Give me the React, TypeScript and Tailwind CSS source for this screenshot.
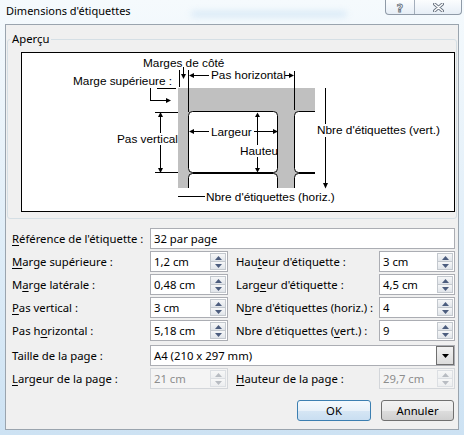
import React from "react";

function Tri({ up, color }: { up: boolean; color: string }) {
  return (
    <svg width="7" height="4" viewBox="0 0 7 4">
      {up ? <polygon points="3.5,0 7,4 0,4" fill={color} /> : <polygon points="0,0 7,0 3.5,4" fill={color} />}
    </svg>
  );
}

function SpinBox({ value, disabled, wide }: { value: string; disabled?: boolean; wide?: boolean }) {
  const box = disabled ? "border-[#d3d6da] bg-[#f4f4f4]" : "border-[#abadb3] bg-white";
  const txt = disabled ? "text-[#8d8d8d]" : "text-black";
  const half = disabled
    ? "border-[#dcdfe3] bg-[linear-gradient(180deg,#f7f7f7,#eceef0)]"
    : "border-[#c3c8ce] bg-[linear-gradient(180deg,#f6f7f8,#e1e5ea)]";
  const arrow = disabled ? "#b8bcc2" : "#4c5d7e";
  return (
    <div className={`flex h-[21px] border ${box} ${wide ? "w-[78px]" : "w-[76px]"}`}>
      <div className={`flex-1 pl-[3px] flex items-center leading-[16px] ${txt}`}>{value}</div>
      <div className="flex flex-col w-[17px] py-[1px] pr-[1px]">
        <div className={`flex-1 flex items-center justify-center border ${half}`}>
          <Tri up color={arrow} />
        </div>
        <div className={`flex-1 flex items-center justify-center border border-t-0 ${half}`}>
          <Tri up={false} color={arrow} />
        </div>
      </div>
    </div>
  );
}

function Preview() {
  const T = { fontFamily: "'Liberation Sans', Arial, sans-serif", fontSize: 11.8, fill: "#000" } as const;
  return (
    <div className="w-[434px] h-[160px] border border-black bg-white">
      <svg width="432" height="158" viewBox="22 53 432 158" shapeRendering="crispEdges">
        <defs>
          <clipPath id="pg">
            <rect x="178" y="88" width="137" height="100" />
          </clipPath>
          <clipPath id="l1">
            <rect x="189" y="112" width="88.5" height="60" />
          </clipPath>
        </defs>
        <g clipPath="url(#pg)">
          <rect x="178" y="88" width="137" height="100" fill="#c0c0c0" />
          <g shapeRendering="geometricPrecision">
            <rect x="188.5" y="111.5" width="89" height="61" rx="4" fill="#fff" stroke="#000" />
            <rect x="188.5" y="173.5" width="89" height="61" rx="4" fill="#fff" stroke="#000" />
            <rect x="294.5" y="111.5" width="89" height="61" rx="4" fill="#fff" stroke="#000" />
            <rect x="294.5" y="173.5" width="89" height="61" rx="4" fill="#fff" stroke="#000" />
          </g>
        </g>
        <g stroke="#000" strokeWidth="1" fill="none">
          <line x1="157" y1="88.5" x2="176" y2="88.5" />
          <polyline points="150.5,88 150.5,100.5 167,100.5" />
          <line x1="179.5" y1="70" x2="179.5" y2="87" />
          <line x1="183.5" y1="67" x2="183.5" y2="75" />
          <line x1="188.5" y1="70" x2="188.5" y2="112" />
          <line x1="193" y1="75.5" x2="209" y2="75.5" />
          <line x1="285" y1="75.5" x2="290" y2="75.5" />
          <line x1="294.5" y1="71" x2="294.5" y2="110" />
          <line x1="155" y1="112.5" x2="178" y2="112.5" />
          <line x1="155" y1="172.5" x2="178" y2="172.5" />
          <line x1="160.5" y1="116" x2="160.5" y2="133" />
          <line x1="160.5" y1="145" x2="160.5" y2="169" />
          <line x1="193" y1="131.5" x2="209" y2="131.5" />
          <line x1="254" y1="131.5" x2="274" y2="131.5" />
          <line x1="257.5" y1="116" x2="257.5" y2="145" />
          <line x1="257.5" y1="157" x2="257.5" y2="168" />
          <line x1="325.5" y1="88" x2="325.5" y2="124" />
          <line x1="325.5" y1="137" x2="325.5" y2="184" />
          <line x1="178" y1="196.5" x2="205" y2="196.5" />
        </g>
        <g fill="#000" shapeRendering="geometricPrecision">
          <polygon points="171,100.5 166,98 166,103" />
          <polygon points="183.5,79 181,74 186,74" />
          <polygon points="189,75.5 194,73 194,78" />
          <polygon points="294,75.5 289,73 289,78" />
          <polygon points="160.5,112 158,117 163,117" />
          <polygon points="160.5,173 158,168 163,168" />
          <polygon points="189,131.5 194,129 194,134" />
          <polygon points="278,131.5 273,129 273,134" />
          <polygon points="257.5,112.5 255,117 260,117" />
          <polygon points="257.5,172.5 255,168 260,168" />
          <polygon points="325.5,188.5 323,183 328,183" />
        </g>
        <g>
          <text x="73" y="85" {...T}>Marge supérieure :</text>
          <text x="143" y="66.5" {...T}>Marges de côté</text>
          <text x="211" y="79" {...T}>Pas horizontal</text>
          <text x="117" y="143" {...T}>Pas vertical</text>
          <text x="211" y="136" {...T}>Largeur</text>
          <g clipPath="url(#l1)">
            <text x="240" y="155" {...T}>Hauteur</text>
          </g>
          <text x="317" y="133.5" {...T}>Nbre d'étiquettes (vert.)</text>
          <text x="206" y="200.5" {...T}>Nbre d'étiquettes (horiz.)</text>
        </g>
      </svg>
    </div>
  );
}

function Row({ left, lv, right, rv }: { left: React.ReactNode; lv: string; right: React.ReactNode; rv: string }) {
  return (
    <div className="flex items-center h-[21px] pl-[6px]">
      <div className="w-[138px] leading-[16px] whitespace-nowrap">{left}</div>
      <SpinBox value={lv} wide />
      <div className="ml-[8px] w-[143px] leading-[16px] whitespace-nowrap">{right}</div>
      <SpinBox value={rv} />
    </div>
  );
}

export default function App() {
  return (
    <div className="w-[464px] h-[435px] flex flex-col overflow-hidden bg-[linear-gradient(180deg,#f5fafd_0%,#e4f0f9_45%,#cde2f3_100%)] font-['Noto_Sans',sans-serif] text-[11.3px] text-black">
      <div className="h-[24px] shrink-0 flex items-start">
        <div className="pl-[6px] pt-[3px] leading-[16px] text-[11px] whitespace-nowrap">Dimensions d'étiquettes</div>
        <div className="ml-[60px] mt-[11px] w-[156px] h-[6px] rounded-full bg-[#c6dff2] opacity-60 blur-[3px]" />
        <div className="ml-auto mr-[2px] flex h-[15px] rounded-b-[4px] border border-t-0 border-[#8f9aa7] overflow-hidden bg-[linear-gradient(180deg,#fbfdfe,#e6eef6)]">
          <div className="w-[29px] flex items-center justify-center border-r border-[#a3aebb]">
            <svg width="12" height="13" viewBox="0 0 12 13">
              <text x="6" y="11" textAnchor="middle" fontFamily="'DejaVu Sans', sans-serif" fontWeight="bold" fontSize="11" fill="#fff" stroke="#6b7582" strokeWidth="0.9">?</text>
            </svg>
          </div>
          <div className="w-[46px] flex items-center justify-center">
            <svg width="11" height="9" viewBox="0 0 11 9">
              <path d="M1.5 1 L9.5 8 M9.5 1 L1.5 8" stroke="#6b7582" strokeWidth="3.2" strokeLinecap="round" />
              <path d="M1.5 1 L9.5 8 M9.5 1 L1.5 8" stroke="#fff" strokeWidth="1.4" strokeLinecap="round" />
            </svg>
          </div>
        </div>
      </div>

      <div className="mx-[5px] h-[406px] shrink-0 border border-[#9aa4ae] bg-[#f0f0f0] flex flex-col">
        <fieldset className="mx-[1px] mt-[6px] border border-[#d5dfe5] rounded-[3px] pt-[5px] pb-[6px]">
          <legend className="ml-[2px] px-[2px] leading-[16px]">Aperçu</legend>
          <div className="pl-[13px]">
            <Preview />
          </div>
        </fieldset>

        <div className="mt-[9px] flex items-center h-[21px] pl-[6px]">
          <div className="w-[138px] leading-[16px] whitespace-nowrap">
            <u className="underline-offset-2">R</u>éférence de l'étiquette :
          </div>
          <div className="w-[305px] h-[21px] border border-[#abadb3] bg-white pl-[3px] flex items-center leading-[16px]">32 par page</div>
        </div>

        <div className="mt-[2px] flex flex-col gap-[2px]">
          <Row
            left={<><u className="underline-offset-2">M</u>arge supérieure :</>}
            lv="1,2 cm"
            right={<>Hau<u className="underline-offset-2">t</u>eur d'étiquette :</>}
            rv="3 cm"
          />
          <Row
            left={<>M<u className="underline-offset-2">a</u>rge latérale :</>}
            lv="0,48 cm"
            right={<>Larg<u className="underline-offset-2">e</u>ur d'étiquette :</>}
            rv="4,5 cm"
          />
          <Row
            left={<><u className="underline-offset-2">P</u>as vertical :</>}
            lv="3 cm"
            right={<>N<u className="underline-offset-2">b</u>re d'étiquettes (horiz.) :</>}
            rv="4"
          />
          <Row
            left={<>Pas h<u className="underline-offset-2">o</u>rizontal :</>}
            lv="5,18 cm"
            right={<>Nbre d'étiquettes (<u className="underline-offset-2">v</u>ert.) :</>}
            rv="9"
          />
        </div>

        <div className="mt-[4px] flex items-center h-[21px] pl-[6px]">
          <div className="w-[138px] leading-[16px]">Taille de la page :</div>
          <div className="w-[305px] h-[21px] border border-[#abadb3] bg-white flex">
            <div className="flex-1 pl-[3px] flex items-center leading-[16px]">A4 (210 x 297 mm)</div>
            <div className="w-[18px] h-full border border-[#6f6f6f] bg-[linear-gradient(180deg,#f2f2f2,#dcdcdc)] flex items-center justify-center">
              <svg width="7" height="4" viewBox="0 0 7 4">
                <polygon points="0,0 7,0 3.5,4" fill="#000" />
              </svg>
            </div>
          </div>
        </div>

        <div className="mt-[2px] flex items-center h-[21px] pl-[6px]">
          <div className="w-[138px] leading-[16px] whitespace-nowrap">
            <u className="underline-offset-2">L</u>argeur de la page :
          </div>
          <SpinBox value="21 cm" disabled wide />
          <div className="ml-[8px] w-[143px] leading-[16px] whitespace-nowrap">
            <u className="underline-offset-2">H</u>auteur de la page :
          </div>
          <SpinBox value="29,7 cm" disabled />
        </div>

        <div className="mt-[11px] flex justify-end gap-[10px] pr-[4px]">
          <button className="w-[74px] h-[21px] rounded-[3px] border border-[#3c7fb1] bg-[linear-gradient(180deg,#f4f9fd_0%,#e8f1f9_50%,#d6e6f4_51%,#c9def1_100%)] leading-[16px]">
            OK
          </button>
          <button className="w-[73px] h-[21px] rounded-[3px] border border-[#707070] bg-[linear-gradient(180deg,#f2f2f2_0%,#ebebeb_50%,#dddddd_51%,#cfcfcf_100%)] leading-[16px]">
            Annuler
          </button>
        </div>
      </div>
    </div>
  );
}
